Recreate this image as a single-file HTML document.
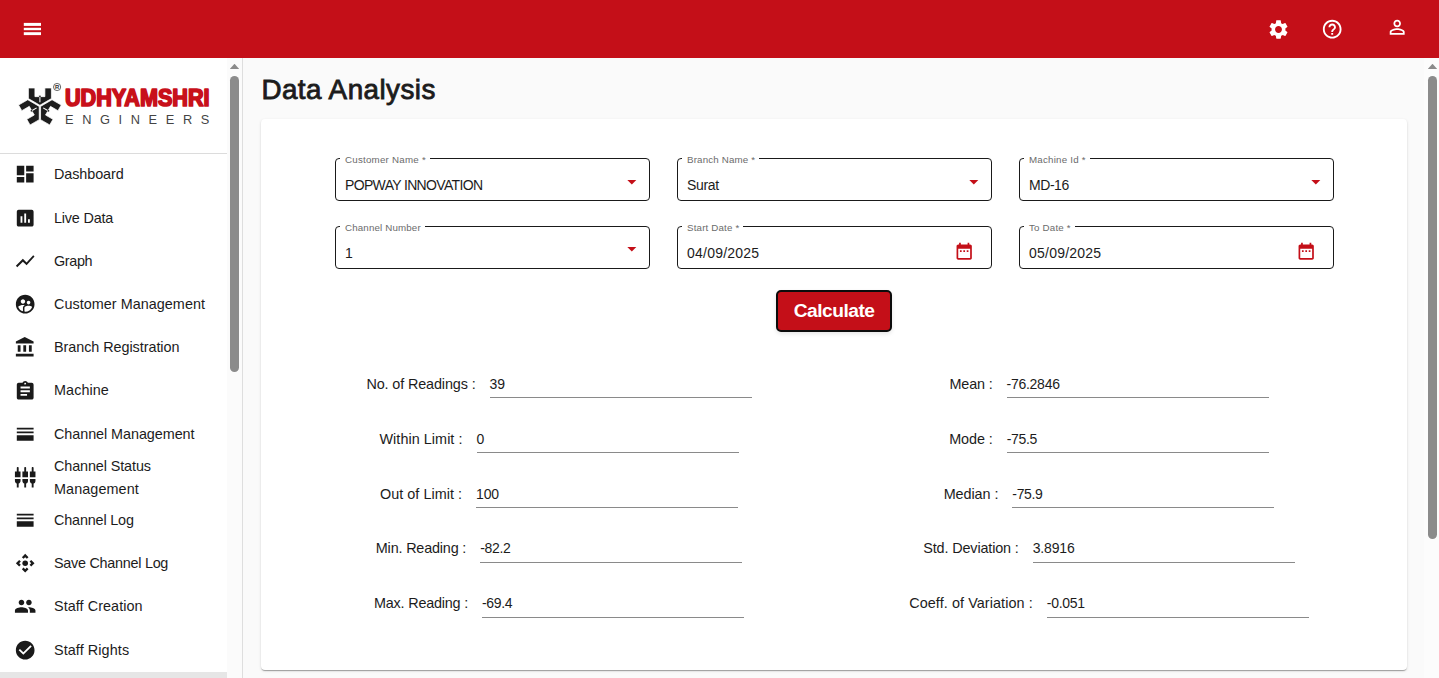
<!DOCTYPE html>
<html lang="en">
<head>
<meta charset="utf-8">
<title>Data Analysis</title>
<style>
*{box-sizing:border-box;margin:0;padding:0}
html,body{width:1439px;height:678px;overflow:hidden;background:#fafafa;font-family:"Liberation Sans",sans-serif;color:#1e1e1e}
.abs{position:absolute}
header{position:absolute;left:0;top:0;width:1439px;height:58px;background:#c40f18}
header svg{position:absolute;fill:#fff}
aside{position:absolute;left:0;top:58px;width:243px;height:620px;background:#fff;border-right:1px solid #dedede;overflow:hidden}
.sbtrack{position:absolute;left:227px;top:0;width:15px;height:620px;background:#fbfbfb}
.sbthumb{position:absolute;left:230px;top:18px;width:9px;height:296px;border-radius:5px;background:#8b8b8b}
.arrowup{position:absolute;width:9.4px;height:5.3px;background:#8b8b8b;clip-path:polygon(50% 0,100% 100%,0 100%)}
.divider{position:absolute;left:0;top:94.5px;width:227px;height:1px;background:#dcdcdc}
ul.menu{position:absolute;left:0;top:94.8px;width:227px;list-style:none}
ul.menu li{position:relative;height:43.27px;display:flex;align-items:center;padding-left:54px;padding-top:1.0px;font-size:14.4px;line-height:21.6px;color:#1c1c1c;white-space:nowrap}
ul.menu li svg{position:absolute;left:14.4px;top:50%;margin-top:-11.2px;width:22.4px;height:22.4px;fill:#1a1a1a}
ul.menu li.sel{background:#e6e6e6}
ul.menu li span{display:block}
main{position:absolute;left:243px;top:58px;width:1181px;height:620px;overflow:hidden}
h1{position:absolute;left:19px;top:14px;font-size:28.8px;font-weight:400;-webkit-text-stroke:0.85px #1c1c1c;font-size:27.8px;left:18.4px;top:14.3px;line-height:36px;white-space:nowrap;color:#1c1c1c}
.card{position:absolute;left:18px;top:61px;width:1146px;height:551px;background:#fff;border-radius:4px;box-shadow:0 2px 1px -1px rgba(0,0,0,.2),0 1px 1px 0 rgba(0,0,0,.14),0 1px 3px 0 rgba(0,0,0,.12)}
.field{position:absolute;width:315px;height:43px;border:1px solid #1a1a1a;border-radius:4px}
.field .lbl{position:absolute;left:4px;top:-5.4px;padding:0 5px 0 6.6px;background:#fff;font-size:13.6px;line-height:16px;color:#6b6b6b;white-space:nowrap;transform:scale(.75);transform-origin:0 0}
.field .val{position:absolute;left:9px;top:16.8px;font-size:13.6px;line-height:20px;color:#1c1c1c;white-space:nowrap}
.field svg{position:absolute;fill:#c40f18}
.btn{position:absolute;left:515.2px;top:171px;width:115.8px;height:42px;background:#c40f18;border:2px solid #0c0c0c;border-radius:5px;color:#fff;font-weight:bold;font-size:19.2px;line-height:37px;text-align:center;box-shadow:0 2px 4px rgba(0,0,0,.10);white-space:nowrap}
.row{position:absolute;width:550px;height:30px;display:flex;justify-content:center;align-items:flex-start}
.row .l{font-size:14.4px;line-height:20px;margin-top:4.2px;margin-right:14px;white-space:pre;color:#1c1c1c}
.row .v{width:262px;border-bottom:1px solid #8a8a8a;font-size:13.6px;line-height:20px;padding-top:4.8px;height:29px;color:#1c1c1c;white-space:nowrap}
.psb{position:absolute;left:1424px;top:58px;width:15px;height:620px;background:#fcfcfc}
</style>
</head>
<body>
<header>
<svg style="left:20px;top:18px;width:24px;height:20px" viewBox="20 18 24 20"><rect x="23.8" y="22.9" width="17.2" height="3"/><rect x="23.8" y="27.8" width="17.2" height="2.4"/><rect x="23.8" y="32.2" width="17.2" height="2.9"/></svg>
<svg style="left:1266.8px;top:17.6px;width:23px;height:23px" viewBox="0 0 24 24"><path d="M19.14 12.94c.04-.3.06-.61.06-.94 0-.32-.02-.64-.07-.94l2.030-1.580c.18-.14.23-.41.12-.61l-1.920-3.320c-.12-.22-.37-.29-.59-.22l-2.390.96c-.5-.38-1.030-.7-1.620-.94l-.36-2.540c-.04-.24-.24-.41-.48-.41h-3.840c-.24 0-.43.17-.47.41l-.36 2.540c-.59.24-1.130.57-1.620.94l-2.390-.96c-.22-.08-.47 0-.59.22L2.740 8.870c-.12.21-.08.47.12.61l2.030 1.580c-.05.3-.09.63-.09.94s.02.64.07.94l-2.030 1.580c-.18.14-.23.41-.12.61l1.920 3.320c.12.22.37.29.59.22l2.390-.96c.5.38 1.030.7 1.620.94l.36 2.540c.05.24.24.41.48.41h3.840c.24 0 .44-.17.47-.41l.36-2.540c.59-.24 1.130-.56 1.620-.94l2.390.96c.22.08.47 0 .59-.22l1.920-3.320c.12-.22.07-.47-.12-.61l-2.010-1.580zM12 15.600c-1.980 0-3.600-1.620-3.600-3.600s1.620-3.600 3.600-3.600 3.600 1.620 3.600 3.600-1.620 3.600-3.600 3.600z"/></svg>
<svg style="left:1321.1px;top:17.7px;width:22.4px;height:22.4px" viewBox="0 0 24 24"><path d="M11 18h2v-2h-2v2zm1-16C6.480 2 2 6.480 2 12s4.480 10 10 10 10-4.480 10-10S17.520 2 12 2zm0 18c-4.410 0-8-3.590-8-8s3.590-8 8-8 8 3.590 8 8-3.590 8-8 8zm0-14c-2.210 0-4 1.790-4 4h2c0-1.100.9-2 2-2s2 .9 2 2c0 2-3 1.750-3 5h2c0-2.250 3-2.500 3-5 0-2.210-1.790-4-4-4z"/></svg>
<svg style="left:1385.8px;top:16.0px;width:22.4px;height:22.4px" viewBox="0 0 24 24"><path d="M12 5.900c1.160 0 2.100.94 2.100 2.100s-.94 2.100-2.100 2.100S9.900 9.160 9.900 8s.94-2.100 2.100-2.100m0 9c2.970 0 6.100 1.460 6.100 2.100v1.100H5.900V17c0-.64 3.130-2.100 6.100-2.100M12 4C9.790 4 8 5.790 8 8s1.790 4 4 4 4-1.790 4-4-1.790-4-4-4zm0 9c-2.670 0-8 1.340-8 4v3h16v-3c0-2.660-5.330-4-8-4z"/></svg>
</header>
<aside>
<svg class="abs" style="left:0;top:0;width:227px;height:94px" viewBox="0 58 227 94">
<g transform="translate(39.9,106.0) scale(1.04)" fill="#1d1d1d" stroke="#fff" stroke-width="0.7"><polygon points="-11.05,-17.30 -4.80,-17.30 -4.80,-9.00 -1.00,-9.00 -1.00,-10.40 1.00,-10.40 1.00,-9.00 4.80,-9.00 4.80,-17.30 11.05,-17.30 11.05,-7.10 0.00,-0.75 -11.05,-7.10"/><polygon points="20.51,-0.92 17.38,4.49 10.19,0.34 8.29,3.63 9.51,4.33 8.51,6.07 7.29,5.37 5.39,8.66 12.58,12.81 9.46,18.22 0.62,13.12 0.65,0.37 11.67,-6.02"/><polygon points="-9.46,18.22 -12.58,12.81 -5.39,8.66 -7.29,5.37 -8.51,6.07 -9.51,4.33 -8.29,3.63 -10.19,0.34 -17.38,4.49 -20.51,-0.92 -11.67,-6.02 -0.65,0.38 -0.62,13.12"/><rect x="-0.5" y="-8.6" width="1" height="5" fill="#fff" stroke="none" transform="rotate(0)"/><rect x="-0.5" y="-8.6" width="1" height="5" fill="#fff" stroke="none" transform="rotate(120)"/><rect x="-0.5" y="-8.6" width="1" height="5" fill="#fff" stroke="none" transform="rotate(240)"/></g>
<circle cx="57.1" cy="87.0" r="3.6" fill="none" stroke="#2a2a2a" stroke-width="0.7"/>
<text x="57.2" y="89.2" font-family="Liberation Sans, sans-serif" font-size="5.8" font-weight="bold" text-anchor="middle" fill="#2a2a2a">R</text>
<text x="65.0" y="106.1" font-family="Liberation Sans, sans-serif" font-size="23" font-weight="bold" fill="#c8101a" stroke="#c8101a" stroke-width="1.7" stroke-linejoin="round" textLength="144.6" lengthAdjust="spacingAndGlyphs">UDHYAMSHRI</text>
<text x="65" y="124.2" font-family="Liberation Sans, sans-serif" font-size="12.8" fill="#444" textLength="144.3" lengthAdjust="spacing">ENGINEERS</text>
</svg>
<div class="divider"></div>
<ul class="menu">
<li style="letter-spacing:-0.089px;"><svg viewBox="0 0 24 24"><path d="M3 13h8V3H3v10zm0 8h8v-6H3v6zm10 0h8V11h-8v10zm0-18v6h8V3h-8z"/></svg><span>Dashboard</span></li>
<li style="top:0.7px;letter-spacing:-0.184px;"><svg viewBox="0 0 24 24"><path d="M19 3H5c-1.100 0-2 .9-2 2v14c0 1.100.9 2 2 2h14c1.100 0 2-.9 2-2V5c0-1.100-.9-2-2-2zM9 17H7v-7h2v7zm4 0h-2V7h2v10zm4 0h-2v-4h2v4z"/></svg><span>Live Data</span></li>
<li style="letter-spacing:-0.353px;"><svg viewBox="0 0 24 24"><path d="M3.500 18.490l6-6.010 4 4L22 6.920l-1.410-1.410-7.090 7.970-4-4L2 16.990z"/></svg><span>Graph</span></li>
<li style="letter-spacing:0.032px;"><svg viewBox="0 0 24 24"><path d="M11.990 2c-5.520 0-10 4.480-10 10s4.480 10 10 10 10-4.480 10-10-4.480-10-10-10zm3.610 6.340c1.070 0 1.930.86 1.930 1.930 0 1.070-.86 1.930-1.930 1.930-1.070 0-1.930-.86-1.930-1.930-.01-1.070.86-1.930 1.930-1.930zm-6-1.580c1.300 0 2.360 1.060 2.360 2.360 0 1.300-1.060 2.360-2.360 2.360s-2.360-1.060-2.360-2.360c0-1.310 1.050-2.360 2.360-2.360zm0 9.130v3.750c-2.400-.75-4.300-2.600-5.140-4.960 1.050-1.120 3.670-1.690 5.140-1.690.53 0 1.200.08 1.900.22-1.640.87-1.900 2.020-1.900 2.680zM11.990 20c-.27 0-.53-.01-.79-.04v-4.070c0-1.420 2.940-2.130 4.400-2.130 1.070 0 2.920.39 3.840 1.150-1.170 2.970-4.060 5.090-7.450 5.090z"/></svg><span>Customer Management</span></li>
<li style="letter-spacing:-0.053px;"><svg viewBox="0 0 24 24"><path d="M4 10v7h3v-7H4zm6 0v7h3v-7h-3zM2 22h19v-3H2v3zm14-12v7h3v-7h-3zm-4.500-9L2 6v2h19V6l-9.500-5z"/></svg><span>Branch Registration</span></li>
<li style="letter-spacing:0.076px;"><svg viewBox="0 0 24 24"><path d="M19 3h-4.180C14.400 1.840 13.300 1 12 1c-1.300 0-2.400.84-2.820 2H5c-1.100 0-2 .9-2 2v14c0 1.100.9 2 2 2h14c1.100 0 2-.9 2-2V5c0-1.100-.9-2-2-2zm-7 0c.55 0 1 .45 1 1s-.45 1-1 1-1-.45-1-1 .45-1 1-1zm2 14H7v-2h7v2zm3-4H7v-2h10v2zm0-4H7V7h10v2z"/></svg><span>Machine</span></li>
<li style="letter-spacing:-0.062px;"><svg viewBox="0 0 24 24"><path d="M3 19h18v-6H3v6zm0-8h18V9H3v2zm0-6v2h18V5H3z"/></svg><span>Channel Management</span></li>
<li><svg viewBox="0 0 24 24"><path d="M5 2c0-.55-.45-1-1-1s-1 .45-1 1v4H1v6h6V6H5V2zm4 14c0 1.300.84 2.400 2 2.820V23h2v-4.180c1.160-.41 2-1.510 2-2.820v-2H9v2zm-8 0c0 1.300.84 2.400 2 2.820V23h2v-4.180C6.160 18.400 7 17.300 7 16v-2H1v2zM21 6V2c0-.55-.45-1-1-1s-1 .45-1 1v4h-2v6h6V6h-2zm-8-4c0-.55-.45-1-1-1s-1 .45-1 1v4H9v6h6V6h-2V2zm4 14c0 1.300.84 2.400 2 2.820V23h2v-4.180c1.160-.41 2-1.510 2-2.820v-2h-6v2z"/></svg><div style="line-height:22.8px;position:relative;top:0px"><span style="letter-spacing:-0.109px;">Channel Status</span><span style="letter-spacing:0.080px;">Management</span></div></li>
<li style="letter-spacing:-0.169px;"><svg viewBox="0 0 24 24"><path d="M3 19h18v-6H3v6zm0-8h18V9H3v2zm0-6v2h18V5H3z"/></svg><span>Channel Log</span></li>
<li style="top:-0.7px;letter-spacing:-0.270px;"><svg viewBox="0 0 24 24"><path d="M15.540 5.540L13.770 7.300 12 5.540 10.230 7.300 8.460 5.540 12 2zm2.920 10l-1.760-1.770L18.460 12l-1.760-1.770 1.760-1.770L22 12zm-10 2.920l1.770-1.760L12 18.460l1.770-1.760 1.770 1.760L12 22zm-2.920-10l1.760 1.770L5.540 12l1.760 1.770-1.760 1.770L2 12z"/><circle cx="12" cy="12" r="3"/></svg><span>Save Channel Log</span></li>
<li style="top:-0.7px;letter-spacing:0.061px;"><svg viewBox="0 0 24 24"><path d="M16 11c1.660 0 2.990-1.340 2.990-3S17.660 5 16 5c-1.660 0-3 1.340-3 3s1.340 3 3 3zm-8 0c1.660 0 2.990-1.340 2.990-3S9.660 5 8 5C6.340 5 5 6.340 5 8s1.340 3 3 3zm0 2c-2.330 0-7 1.170-7 3.500V19h14v-2.500c0-2.330-4.670-3.500-7-3.500zm8 0c-.29 0-.62.020-.97.050 1.160.84 1.970 1.970 1.970 3.450V19h6v-2.500c0-2.330-4.670-3.500-7-3.500z"/></svg><span>Staff Creation</span></li>
<li style="letter-spacing:0.087px;"><svg viewBox="0 0 24 24"><path d="M12 2C6.480 2 2 6.480 2 12s4.480 10 10 10 10-4.480 10-10S17.520 2 12 2zm-2 15l-5-5 1.410-1.410L10 14.170l7.590-7.590L19 8l-9 9z"/></svg><span>Staff Rights</span></li>
<li class="sel" style="letter-spacing:0.001px;"><svg viewBox="0 0 24 24"><path d="M19 3H5c-1.100 0-2 .9-2 2v14c0 1.100.9 2 2 2h14c1.100 0 2-.9 2-2V5c0-1.100-.9-2-2-2zM9 17H7v-7h2v7zm4 0h-2V7h2v10zm4 0h-2v-4h2v4z"/></svg><span>Data Analysis</span></li>
</ul>
<div class="sbtrack"></div><div class="arrowup" style="left:229.8px;top:5.8px"></div><div class="sbthumb"></div>
</aside>
<main>
<h1 style="letter-spacing:0.465px;">Data Analysis</h1>
<div class="card">
<div class="field" style="left:74px;top:39px"><span class="lbl" style="font-size:9.75px;transform:none;line-height:12px;padding:0 3.75px 0 5px;letter-spacing:0.230px;">Customer Name *</span><span class="val" style="font-size:14px;top:16.1px;letter-spacing:-0.658px;">POPWAY INNOVATION</span><svg style="left:285.2px;top:11.9px;width:21.6px;height:21.6px" viewBox="0 0 24 24"><path d="M7 10l5 5 5-5z"/></svg></div>
<div class="field" style="left:416px;top:39px"><span class="lbl" style="font-size:9.75px;transform:none;line-height:12px;padding:0 3.75px 0 5px;letter-spacing:0.168px;">Branch Name *</span><span class="val" style="font-size:14px;top:16.1px;letter-spacing:-0.344px;">Surat</span><svg style="left:285.2px;top:11.9px;width:21.6px;height:21.6px" viewBox="0 0 24 24"><path d="M7 10l5 5 5-5z"/></svg></div>
<div class="field" style="left:758px;top:39px"><span class="lbl" style="font-size:9.75px;transform:none;line-height:12px;padding:0 3.75px 0 5px;letter-spacing:0.220px;">Machine Id *</span><span class="val" style="font-size:14px;top:16.1px;letter-spacing:-0.438px;">MD-16</span><svg style="left:285.2px;top:11.9px;width:21.6px;height:21.6px" viewBox="0 0 24 24"><path d="M7 10l5 5 5-5z"/></svg></div>
<div class="field" style="left:74px;top:107px"><span class="lbl" style="font-size:9.75px;transform:none;line-height:12px;padding:0 3.75px 0 5px;letter-spacing:0.152px;">Channel Number</span><span class="val" style="font-size:14px;top:16.1px;letter-spacing:-0.156px;">1</span><svg style="left:285.2px;top:11.0px;width:21.6px;height:21.6px" viewBox="0 0 24 24"><path d="M7 10l5 5 5-5z"/></svg></div>
<div class="field" style="left:416px;top:107px"><span class="lbl" style="font-size:9.75px;transform:none;line-height:12px;padding:0 3.75px 0 5px;letter-spacing:0.164px;">Start Date *</span><span class="val" style="font-size:14px;top:16.1px;letter-spacing:0.227px;">04/09/2025</span><svg style="left:276.3px;top:13.7px;width:20.4px;height:20.4px" viewBox="0 0 24 24"><path d="M9 11H7v2h2v-2zm4 0h-2v2h2v-2zm4 0h-2v2h2v-2zm2-7h-1V2h-2v2H8V2H6v2H5c-1.110 0-1.990.9-1.990 2L3 20c0 1.100.89 2 2 2h14c1.100 0 2-.9 2-2V6c0-1.100-.9-2-2-2zm0 16H5V9h14v11z"/></svg></div>
<div class="field" style="left:758px;top:107px"><span class="lbl" style="font-size:9.75px;transform:none;line-height:12px;padding:0 3.75px 0 5px;letter-spacing:0.189px;">To Date *</span><span class="val" style="font-size:14px;top:16.1px;letter-spacing:0.227px;">05/09/2025</span><svg style="left:276.3px;top:13.7px;width:20.4px;height:20.4px" viewBox="0 0 24 24"><path d="M9 11H7v2h2v-2zm4 0h-2v2h2v-2zm4 0h-2v2h2v-2zm2-7h-1V2h-2v2H8V2H6v2H5c-1.110 0-1.990.9-1.990 2L3 20c0 1.100.89 2 2 2h14c1.100 0 2-.9 2-2V6c0-1.100-.9-2-2-2zm0 16H5V9h14v11z"/></svg></div>
<div class="btn" style="letter-spacing:-0.497px;">Calculate</div>
<div class="row" style="left:23px;top:250px"><span class="l" style="position:relative;top:0.8px;letter-spacing:-0.125px;">No. of Readings :</span><span class="v" style="padding-top:5.0px;font-size:14px;letter-spacing:-0.148px;">39</span></div>
<div class="row" style="left:573px;top:250px"><span class="l" style="position:relative;top:0.8px;letter-spacing:-0.161px;">Mean :</span><span class="v" style="padding-top:5.0px;font-size:14px;letter-spacing:-0.262px;">-76.2846</span></div>
<div class="row" style="left:23px;top:305px"><span class="l" style="position:relative;top:0.8px;letter-spacing:0.049px;">Within Limit :</span><span class="v" style="padding-top:5.0px;font-size:14px;letter-spacing:-0.156px;">0</span></div>
<div class="row" style="left:573px;top:305px"><span class="l" style="position:relative;top:0.8px;letter-spacing:-0.070px;">Mode :</span><span class="v" style="padding-top:5.0px;font-size:14px;letter-spacing:-0.331px;">-75.5</span></div>
<div class="row" style="left:23px;top:360px"><span class="l" style="position:relative;top:0.8px;letter-spacing:0.032px;">Out of Limit :</span><span class="v" style="padding-top:5.0px;font-size:14px;letter-spacing:-0.146px;">100</span></div>
<div class="row" style="left:573px;top:360px"><span class="l" style="position:relative;top:0.8px;letter-spacing:-0.070px;">Median :</span><span class="v" style="padding-top:5.0px;font-size:14px;letter-spacing:-0.331px;">-75.9</span></div>
<div class="row" style="left:23px;top:415px"><span class="l" style="letter-spacing:-0.171px;">Min. Reading :</span><span class="v" style="padding-top:4.2px;font-size:14px;letter-spacing:-0.331px;">-82.2</span></div>
<div class="row" style="left:573px;top:415px"><span class="l" style="letter-spacing:-0.135px;">Std. Deviation :</span><span class="v" style="padding-top:4.2px;font-size:14px;letter-spacing:-0.172px;">3.8916</span></div>
<div class="row" style="left:23px;top:470px"><span class="l" style="letter-spacing:-0.205px;">Max. Reading :</span><span class="v" style="padding-top:4.2px;font-size:14px;letter-spacing:-0.331px;">-69.4</span></div>
<div class="row" style="left:573px;top:470px"><span class="l" style="letter-spacing:0.086px;">Coeff. of Variation :</span><span class="v" style="padding-top:4.2px;font-size:14px;letter-spacing:-0.299px;">-0.051</span></div>
</div></main>
<div class="psb"><div class="arrowup" style="left:3.8px;top:5.8px"></div><div class="abs" style="left:4px;top:18px;width:9px;height:463px;border-radius:5px;background:#8b8b8b"></div></div>
</body>
</html>
